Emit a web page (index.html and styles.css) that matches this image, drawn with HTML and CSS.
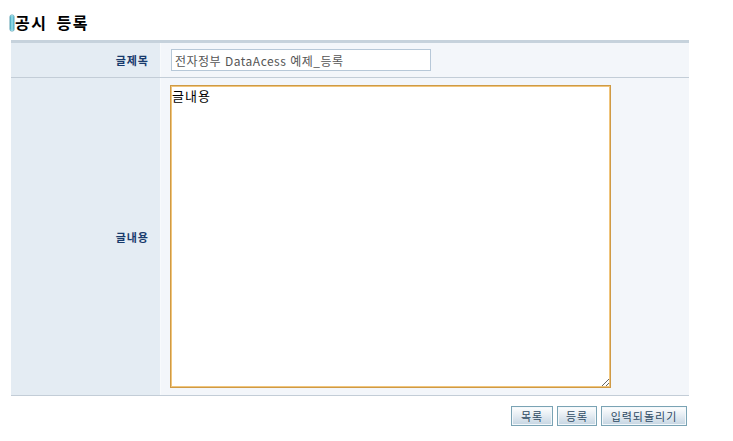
FILE: index.html
```html
<!DOCTYPE html>
<html lang="ko">
<head>
<meta charset="utf-8">
<title>공시 등록</title>
<link rel="stylesheet" href="styles.css">
</head>
<body>
<div class="page">
  <h2 class="title"><span class="bullet"></span>공시 등록</h2>
  <div class="form">
    <div class="row row-subject">
      <div class="label">글제목</div>
      <div class="value">
        <input class="subject" type="text" value="전자정부 DataAcess 예제_등록">
      </div>
    </div>
    <div class="row row-content">
      <div class="label">글내용</div>
      <div class="value">
        <textarea class="content">글내용</textarea>
      </div>
    </div>
  </div>
  <div class="buttons">
    <button class="btn" type="button">목록</button>
    <button class="btn" type="button">등록</button>
    <button class="btn" type="button">입력되돌리기</button>
  </div>
</div>
</body>
</html>
```

FILE: styles.css
```css
html, body {
  margin: 0;
  padding: 0;
  background: #ffffff;
}
body {
  font-family: "Noto Sans CJK KR", "Liberation Sans", sans-serif;
  font-size: 12px;
  color: #000;
}
.page {
  width: 678px;
  padding: 12px 0 0 11px;
}
.title {
  margin: 0;
  height: 28px;
  display: flex;
  align-items: flex-start;
  font-size: 16px;
  font-weight: bold;
  line-height: 20px;
  letter-spacing: 1.5px;
  word-spacing: 3px;
  margin-left: -1px;
}
.bullet {
  width: 4px;
  height: 16px;
  margin-top: 3px;
  margin-right: 1px;
  border-radius: 2px;
  background: linear-gradient(90deg, #3e9fb6 0%, #9fe3ef 50%, #4aa9c0 100%);
  box-shadow: 0 0 0 0.5px #5f9fb0;
}
.form {
  border-top: 3px solid #c6d2dc;
  border-bottom: 1px solid #c3cdd7;
}
.row {
  display: flex;
}
.row-subject {
  height: 34px;
  border-bottom: 1px solid #c3cdd7;
}
.row-content {
  height: 317px;
}
.label {
  width: 138px;
  padding-right: 11px;
  background: #e4ecf3;
  border-right: 1px solid #f8fafc;
  display: flex;
  align-items: center;
  justify-content: flex-end;
  font-size: 11px;
  font-weight: bold;
  color: #173a6c;
  letter-spacing: 1px;
}
.value {
  flex: 1;
  background: #f3f6fa;
  padding-left: 10px;
  display: flex;
  align-items: center;
}
.subject {
  box-sizing: border-box;
  width: 260px;
  height: 22px;
  margin: 0;
  padding: 0 4px 0 3px;
  border: 1px solid #b7c8d8;
  background: #fff;
  font-family: "Noto Sans CJK KR", "Liberation Sans", sans-serif;
  font-size: 12px;
  letter-spacing: 0.5px;
  color: #555;
  outline: none;
}
.row-content .value {
  align-items: flex-start;
  padding-left: 9px;
  padding-top: 7px;
}
.content {
  box-sizing: border-box;
  width: 441px;
  height: 303px;
  margin: 0;
  padding: 2px 1px;
  border: 1px solid #cf9a45;
  box-shadow: inset 0 0 0 1px #f0c57c;
  background: #fff;
  font-family: "Noto Sans CJK KR", "Liberation Sans", sans-serif;
  font-size: 13px;
  line-height: 15px;
  letter-spacing: 1px;
  color: #000;
  outline: none;
}
.buttons {
  display: flex;
  justify-content: flex-end;
  gap: 4px;
  padding-top: 10px;
  padding-right: 2px;
}
.btn {
  height: 20px;
  margin: 0;
  padding: 0 6px;
  border: 1px solid #7aa3b4;
  box-shadow: inset 0 0 0 1px #f4f8fb;
  background: linear-gradient(180deg, #ffffff 0%, #e6edf3 45%, #c5d5e2 100%);
  font-family: "Noto Sans CJK KR", "Liberation Sans", sans-serif;
  font-size: 11px;
  line-height: 16px;
  color: #2e4a63;
  letter-spacing: 1px;
}
.btn:nth-child(1) { width: 42px; }
.btn:nth-child(2) { width: 40px; }
.btn:nth-child(3) { width: 86px; }
```
